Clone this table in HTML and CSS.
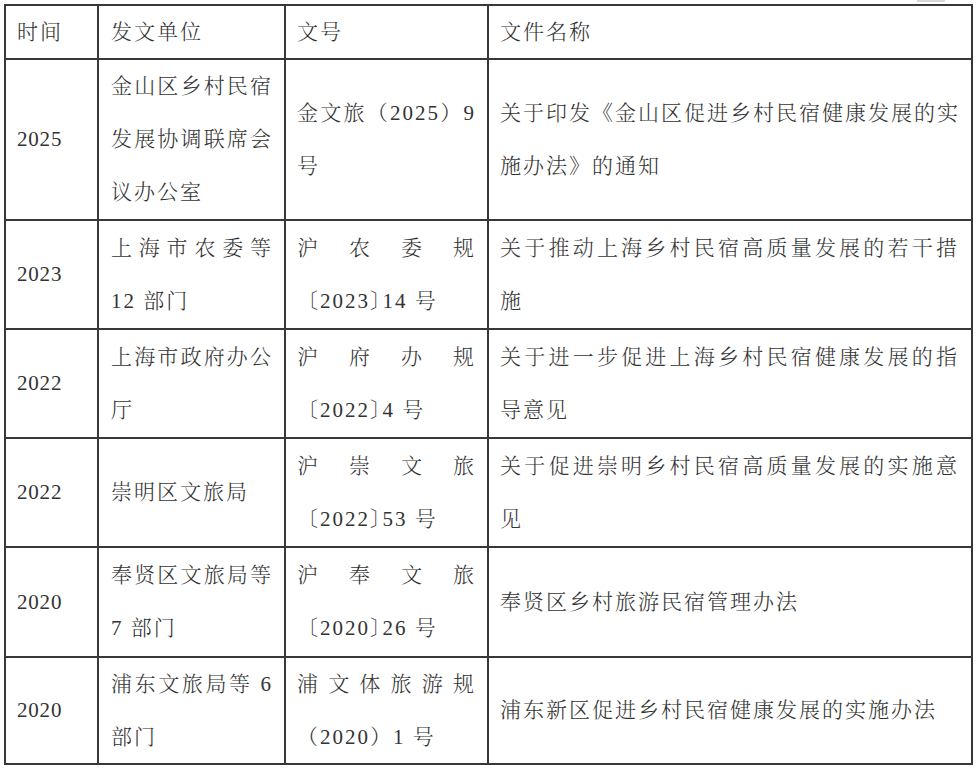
FILE: index.html
```html
<!DOCTYPE html>
<html lang="zh-CN">
<head>
<meta charset="utf-8">
<title>上海乡村民宿政策文件</title>
<link rel="stylesheet" href="styles.css">
</head>
<body>
<div class="page">
  <span class="corner-mark"></span>
  <div class="doc-table">
    <div class="cell c1"><div class="ln">时间</div></div>
    <div class="cell c2"><div class="ln">发文单位</div></div>
    <div class="cell c3"><div class="ln">文号</div></div>
    <div class="cell c4"><div class="ln">文件名称</div></div>

    <div class="cell c1"><div class="ln yr">2025</div></div>
    <div class="cell c2"><div class="ln j">金山区乡村民宿</div><div class="ln j">发展协调联席会</div><div class="ln">议办公室</div></div>
    <div class="cell c3"><div class="ln j">金文旅（2025）9</div><div class="ln">号</div></div>
    <div class="cell c4"><div class="ln j">关于印发《金山区促进乡村民宿健康发展的实</div><div class="ln">施办法》的通知</div></div>

    <div class="cell c1"><div class="ln yr">2023</div></div>
    <div class="cell c2"><div class="ln j">上海市农委等</div><div class="ln">12 部门</div></div>
    <div class="cell c3"><div class="ln j">沪农委规</div><div class="ln">〔2023<span class="half">〕</span>14 号</div></div>
    <div class="cell c4"><div class="ln j">关于推动上海乡村民宿高质量发展的若干措</div><div class="ln">施</div></div>

    <div class="cell c1"><div class="ln yr">2022</div></div>
    <div class="cell c2"><div class="ln j">上海市政府办公</div><div class="ln">厅</div></div>
    <div class="cell c3"><div class="ln j">沪府办规</div><div class="ln">〔2022<span class="half">〕</span>4 号</div></div>
    <div class="cell c4"><div class="ln j">关于进一步促进上海乡村民宿健康发展的指</div><div class="ln">导意见</div></div>

    <div class="cell c1"><div class="ln yr">2022</div></div>
    <div class="cell c2"><div class="ln">崇明区文旅局</div></div>
    <div class="cell c3"><div class="ln j">沪崇文旅</div><div class="ln">〔2022<span class="half">〕</span>53 号</div></div>
    <div class="cell c4"><div class="ln j">关于促进崇明乡村民宿高质量发展的实施意</div><div class="ln">见</div></div>

    <div class="cell c1"><div class="ln yr">2020</div></div>
    <div class="cell c2"><div class="ln j">奉贤区文旅局等</div><div class="ln">7 部门</div></div>
    <div class="cell c3"><div class="ln j">沪奉文旅</div><div class="ln">〔2020<span class="half">〕</span>26 号</div></div>
    <div class="cell c4"><div class="ln">奉贤区乡村旅游民宿管理办法</div></div>

    <div class="cell c1"><div class="ln yr">2020</div></div>
    <div class="cell c2"><div class="ln j">浦东文旅局等 6</div><div class="ln">部门</div></div>
    <div class="cell c3"><div class="ln j">浦文体旅游规</div><div class="ln">（2020）1 号</div></div>
    <div class="cell c4"><div class="ln">浦东新区促进乡村民宿健康发展的实施办法</div></div>
  </div>
</div>
</body>
</html>
```

FILE: styles.css
```css
html, body {
  margin: 0;
  padding: 0;
  background: #ffffff;
}

.page {
  position: relative;
  padding: 4px 0 0 4px;
}

.corner-mark {
  position: absolute;
  top: 0;
  left: 917px;
  width: 28px;
  height: 2px;
  background: #d6d6d6;
}

.doc-table {
  display: grid;
  grid-template-columns: 93px 187px 203px 484px;
  grid-template-rows: 54px 161px 109px 109px 109px 110px 107px;
  width: 969px;
  box-sizing: border-box;
  border-top: 2px solid #383838;
  border-left: 2px solid #383838;
}

.cell {
  box-sizing: border-box;
  min-width: 0;
  display: flex;
  flex-direction: column;
  justify-content: center;
  border-right: 2px solid #383838;
  border-bottom: 2px solid #383838;
  font-family: "Liberation Serif", "Noto Serif CJK SC", "Noto Sans CJK SC", serif;
  font-size: 21px;
  font-weight: 300;
  line-height: 53px;
  letter-spacing: 2px;
  color: #333333;
  white-space: nowrap;
  text-spacing-trim: space-all;
}

.c1 { padding: 0 8px 0 11px; }
.c2 { padding: 0 11px 0 12px; }
.c3 { padding: 0 11px 0 11px; }
.c4 { padding: 0 12px 0 11px; }

.ln {
  text-align: left;
}

.yr {
  letter-spacing: 0.8px;
}

.j {
  text-align: justify;
  text-align-last: justify;
}

.half {
  font-feature-settings: "halt";
}
```
